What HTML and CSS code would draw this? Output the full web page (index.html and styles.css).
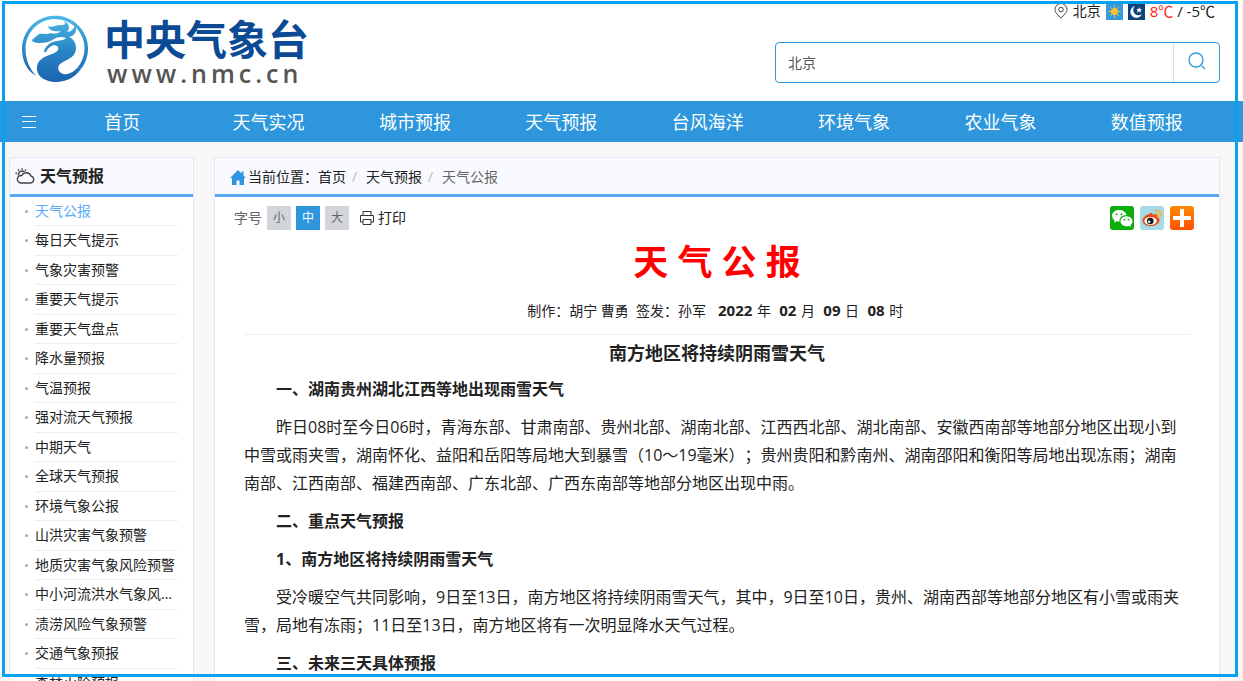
FILE: index.html
```html
<!DOCTYPE html>
<html lang="zh-CN">
<head>
<meta charset="utf-8">
<title>中央气象台 - 天气公报</title>
<link rel="stylesheet" href="styles.css">
</head>
<body>
<div class="page">
  <header class="header">
    <a class="logo" href="#">
      <svg class="logo-mark" viewBox="0 0 68 68" aria-hidden="true">
        <defs><linearGradient id="lg" gradientUnits="userSpaceOnUse" x1="0" y1="0" x2="0" y2="68"><stop offset="0" stop-color="#4cbbe8"/><stop offset="0.5" stop-color="#2b87c6"/><stop offset="1" stop-color="#1a62b0"/></linearGradient></defs>
        <g fill="url(#lg)">
          <path d="M15 61C5 55 1 45 1 33.500A33 33 0 1 1 60 54L57 52A29.500 29.500 0 1 0 4.500 33.500C4.500 44 8 53 15 61Z"/>
          <path d="M11 25C13 23 16 21 18 19C22 18 26 20 29 18C33 19 37 19 40 16C35 17 28 16 27 11C31 13 35 10 40 10C44 10 45 9 43 6C49 9 49 14 46 17C50 17 53 14 54 10C57 17 53 21 48 22C52 24 55 27 55 33C55 41 48 44 42 47C36 50 36 55 40 58C45 61 52 58 57 52L60 54C52 65 42 67 33 67C22 66 15 60 16 52C17 42 28 41 35 37C39 34 38 31 33 30C29 31 27 33 25 37L23 37C24 31 29 27 36 26C40 25 44 25 45 23C40 21 36 22 33 24C28 27 24 28 18 28C15 28 11 27 11 25Z"/>
        </g>
      </svg>
      <span class="logo-text"><span class="logo-name">中央气象台</span><span class="logo-url">www.nmc.cn</span></span>
    </a>
    <div class="header-side">
      <div class="weather">
        <svg class="pin" viewBox="0 0 14 16" aria-hidden="true"><path d="M7 15.200C4 12 1 9.500 1 6.500a6 6 0 0 1 12 0C13 9.500 10 12 7 15.200Z"/><circle cx="7" cy="6.500" r="2.300"/></svg>
        <span class="city">北京</span>
        <svg class="wicon" viewBox="0 0 17 17" aria-hidden="true"><rect width="17" height="17" fill="#359bd9"/><path d="M8.500 2v13M2 8.500h13M4 4l9 9M13 4l-9 9" stroke="#c9bd6a"/><circle cx="8.500" cy="8.500" r="3.500" fill="#fbc02d"/></svg>
        <svg class="wicon" viewBox="0 0 17 17" aria-hidden="true"><rect width="17" height="17" fill="#0d4379"/><path d="M7 3A6 6 0 1 0 14 11A5 5 0 0 1 7 3Z" fill="#fff"/><path d="M11 4l1 2 2 .300-1.500 1.300.300 2-1.800-1-1.800 1 .300-2L8.500 6.300l2-.300z" fill="#fff"/></svg>
        <span class="temp"><span class="hot">8℃</span> / -5℃</span>
      </div>
      <form class="search">
        <input class="search-input" type="text" value="北京" aria-label="城市搜索">
        <button class="search-btn" type="button" aria-label="搜索"><svg viewBox="0 0 18 18" aria-hidden="true"><circle cx="8" cy="8" r="7"/><path d="M13.500 13.500l3.500 3.500"/></svg></button>
      </form>
    </div>
  </header>
  <nav class="nav">
    <button class="menu-btn" type="button" aria-label="菜单"><svg viewBox="0 0 14 12" aria-hidden="true"><path d="M0 .500h14M0 5.500h14M0 11.500h14"/></svg></button>
    <div class="nav-links">
      <a href="#">首页</a><a href="#">天气实况</a><a href="#">城市预报</a><a href="#">天气预报</a><a href="#">台风海洋</a><a href="#">环境气象</a><a href="#">农业气象</a><a href="#">数值预报</a>
    </div>
  </nav>
  <div class="content">
    <aside class="sidebar">
      <h2 class="panel-head side-title">
        <svg class="cloud" viewBox="0 0 20 16" aria-hidden="true"><path d="M5.500 15h10a3.500 3.500 0 0 0 .500-6.900A5 5 0 0 0 6.800 7.500A3.800 3.800 0 0 0 5.500 15Z"/><path d="M3.500 7.500A3.700 3.700 0 0 1 9.500 4M.500 5l1.500.500M3 1.500l1 1.300M7 .200v1.500M11 1.500l-1 1.200"/></svg>
        天气预报
      </h2>
      <ul class="side-list">
        <li class="active"><a href="#">天气公报</a></li>
        <li><a href="#">每日天气提示</a></li>
        <li><a href="#">气象灾害预警</a></li>
        <li><a href="#">重要天气提示</a></li>
        <li><a href="#">重要天气盘点</a></li>
        <li><a href="#">降水量预报</a></li>
        <li><a href="#">气温预报</a></li>
        <li><a href="#">强对流天气预报</a></li>
        <li><a href="#">中期天气</a></li>
        <li><a href="#">全球天气预报</a></li>
        <li><a href="#">环境气象公报</a></li>
        <li><a href="#">山洪灾害气象预警</a></li>
        <li><a href="#">地质灾害气象风险预警</a></li>
        <li><a href="#">中小河流洪水气象风...</a></li>
        <li><a href="#">渍涝风险气象预警</a></li>
        <li><a href="#">交通气象预报</a></li>
        <li><a href="#">森林火险预报</a></li>
      </ul>
    </aside>
    <main class="main">
      <div class="panel-head crumbs">
        <svg class="home" viewBox="0 0 16 15" aria-hidden="true"><path d="M8 0L0 8h2v7h4.500v-4.500h3V15H14V8h2l-2.500-2.500V1.500h-2v2z"/></svg>
        <span>当前位置：<a href="#">首页</a></span><span class="sep">/</span><a href="#">天气预报</a><span class="sep">/</span><span class="current">天气公报</span>
      </div>
      <div class="toolbar">
        <span class="size-label">字号</span>
        <button class="size" type="button">小</button>
        <button class="size on" type="button">中</button>
        <button class="size" type="button">大</button>
        <button class="print" type="button"><svg viewBox="0 0 16 16" aria-hidden="true"><path d="M4 5.500V1.500h8v4M4 12H1.500V5.500h13V12H12M4 9.500h8v5H4z"/></svg>打印</button>
        <div class="share">
          <a href="#" aria-label="微信"><svg viewBox="0 0 24 24" aria-hidden="true"><rect width="24" height="24" rx="3" fill="#0cae0c"/><path d="M9 4C5 4 2 6.500 2 9.800c0 1.900 1 3.500 2.600 4.500L4 16.500l2.600-1.300c1 .300 2 .300 3 .300C9 11.500 12.500 9 16.500 9.300C16 6 13 4 9 4Z" fill="#fff"/><path d="M16.500 10.200c-3.400 0-6 2.200-6 5s2.600 5 6 5c.800 0 1.500-.100 2.200-.300l2.200 1.100-.600-1.900c1.400-.900 2.200-2.300 2.200-3.900c0-2.800-2.600-5-6-5Z" fill="#fff"/><g fill="#0cae0c"><circle cx="6.700" cy="8.200" r="1"/><circle cx="11.500" cy="8.200" r="1"/><circle cx="14.500" cy="13.700" r=".9"/><circle cx="18.500" cy="13.700" r=".9"/></g></svg></a>
          <a href="#" aria-label="微博"><svg viewBox="0 0 24 24" aria-hidden="true"><rect width="24" height="24" rx="3" fill="#a5dbe6"/><path d="M9 8c2-2 4-1.500 3.500.800C15 7.500 18 8 17 11c2 .500 2.700 1.800 2.500 3.500C19 18 15 20 10.500 20S2.500 18 2.500 14.500C2.500 12 5 9.500 9 8Z" fill="#ee4b17"/><ellipse cx="10.500" cy="15" rx="6.200" ry="4" fill="#fff"/><circle cx="10.300" cy="15" r="3.300" fill="#181818"/><circle cx="9.200" cy="15.800" r="1.200" fill="#fff"/><path d="M16 7.500c2-.300 3 1 2.800 2.800M15.500 4.500c4-.500 6.500 2 6 6" fill="none" stroke="#f3b32b" stroke-width="1.600" stroke-linecap="round"/></svg></a>
          <a href="#" aria-label="更多分享"><svg viewBox="0 0 24 24" aria-hidden="true"><defs><linearGradient id="og" x1="0" y1="0" x2="0" y2="1"><stop offset="0" stop-color="#ff8a00"/><stop offset="1" stop-color="#ff5000"/></linearGradient></defs><rect width="24" height="24" rx="3" fill="url(#og)"/><path d="M12 3v18M3 12h18" stroke="#fff" stroke-width="4"/></svg></a>
        </div>
      </div>
      <article class="article">
        <h1 class="title">天 气 公 报</h1>
        <p class="meta">制作：胡宁 曹勇&nbsp; 签发：孙军 &nbsp; <b>2022</b> 年 &nbsp;<b>02</b> 月 &nbsp;<b>09</b> 日 &nbsp;<b>08</b> 时&nbsp;</p>
        <h2 class="subtitle">南方地区将持续阴雨雪天气</h2>
        <h3>一、湖南贵州湖北江西等地出现雨雪天气</h3>
        <p>昨日08时至今日06时，青海东部、甘肃南部、贵州北部、湖南北部、江西西北部、湖北南部、安徽西南部等地部分地区出现小到中雪或雨夹雪，湖南怀化、益阳和岳阳等局地大到暴雪（10～19毫米）；贵州贵阳和黔南州、湖南邵阳和衡阳等局地出现冻雨；湖南南部、江西南部、福建西南部、广东北部、广西东南部等地部分地区出现中雨。</p>
        <h3>二、重点天气预报</h3>
        <h3>1、南方地区将持续阴雨雪天气</h3>
        <p>受冷暖空气共同影响，9日至13日，南方地区将持续阴雨雪天气，其中，9日至10日，贵州、湖南西部等地部分地区有小雪或雨夹雪，局地有冻雨；11日至13日，南方地区将有一次明显降水天气过程。</p>
        <h3>三、未来三天具体预报</h3>
      </article>
    </main>
  </div>
  <div class="frame"></div>
</div>
</body>
</html>
```
FILE: styles.css
```css
* { box-sizing: border-box; }
body {
  margin: 0;
  background: #f7f7f7;
  color: #222;
  font: 14px/20px "Open Sans", "Noto Sans CJK SC", sans-serif;
  text-spacing-trim: space-all;
}
h1, h2, h3, p, ul { margin: 0; padding: 0; }
a { color: inherit; text-decoration: none; }
button, input { font: inherit; color: inherit; border: 0; margin: 0; padding: 0; background: none; }
svg { display: block; flex: none; }

.page { position: relative; height: 100vh; overflow: hidden; }
.frame {
  position: absolute;
  inset: 1px 5px 4px 2px;
  border: 3px solid #08a2ef;
  pointer-events: none;
}

.header {
  display: flex;
  justify-content: space-between;
  height: 101px;
  padding: 1px 23px 0 21px;
  background: #fff;
}
.logo { display: flex; gap: 15px; padding-top: 14px; }
.logo-mark { width: 68px; height: 68px; }
.logo-text { display: flex; flex-direction: column; }
.logo-name { font-size: 41px; line-height: 48px; font-weight: 700; color: #0b4a94; }
.logo-url { padding-left: 3px; font-size: 25px; line-height: 20px; font-weight: 600; letter-spacing: 4px; color: #555; }

.header-side { display: flex; flex-direction: column; gap: 21px; width: 445px; }
.weather { display: flex; align-items: center; justify-content: flex-end; gap: 5px; height: 20px; padding-right: 5px; }
.pin { width: 14px; height: 16px; fill: none; stroke: #444; }
.wicon { width: 17px; height: 17px; }
.temp { font-size: 15px; }
.hot { color: #f22; }
.search { display: flex; height: 41px; border: 1px solid #3296d8; border-radius: 4px; background: #fff; }
.search-input { flex: 1; min-width: 0; padding: 0 12px; color: #555; outline: 0; }
.search-btn { display: flex; align-items: center; justify-content: center; width: 46px; padding-bottom: 4px; border-left: 1px solid #ddd; }
.search-btn svg { width: 18px; height: 18px; fill: none; stroke: #3296d8; stroke-width: 1.300; }

.nav { display: flex; height: 41px; padding-right: 23px; background: #2d96dc; color: #fff; }
.menu-btn { width: 49px; padding-left: 22px; }
.menu-btn svg { width: 14px; height: 12px; stroke: #fff; }
.nav-links { display: flex; flex: 1; }
.nav-links a { flex: 1; text-align: center; font-size: 18px; line-height: 42px; }

.content { display: flex; gap: 20px; padding: 15px 23px 0 9px; }
.sidebar { flex: none; width: 185px; border: 1px solid #e4e8ee; background: #fff; }
.main { flex: 1; min-width: 0; border: 1px solid #e4e8ee; background: #fff; }
.panel-head { display: flex; align-items: center; height: 39px; border-bottom: 3px solid #5ba9f8; background: #f8faff; }
.side-title { gap: 5px; padding-left: 5px; font-size: 16px; }
.cloud { width: 20px; height: 16px; fill: none; stroke: #444; stroke-width: 1.400; }
.side-list { padding: 0 15px 0 25px; list-style: none; }
.side-list li { position: relative; height: 29px; border-bottom: 1px solid #eee; line-height: 28px; }
.side-list li:nth-child(even) { height: 30px; }
.side-list li::before { position: absolute; left: -10px; top: 13px; width: 3px; height: 3px; border-radius: 50%; background: #aaa; content: ""; }
.side-list a { display: block; overflow: hidden; white-space: nowrap; }
.side-list .active { color: #5ba9f8; }

.crumbs { padding: 2px 0 0 15px; }
.home { width: 16px; height: 15px; margin-right: 2px; fill: #2d96dc; }
.sep { width: 20px; padding-left: 6px; color: #bbb; }
.current { color: #666; }

.toolbar { display: flex; align-items: center; gap: 5px; padding: 9px 25px 0 19px; }
.size-label { color: #666; }
.size { width: 24px; height: 24px; background: #d2d5db; color: #666; font-size: 12px; line-height: 24px; }
.size.on { background: #2d96dc; color: #fff; }
.print { display: flex; align-items: center; gap: 3px; padding-left: 5px; }
.print svg { width: 16px; height: 16px; fill: none; stroke: #333; }
.share { display: flex; gap: 6px; margin-left: auto; }
.share svg { width: 24px; height: 24px; }

.article { padding: 8px 29px 0; font-size: 16px; line-height: 28px; }
.article h3 { margin-bottom: 10px; padding-left: 32px; font-size: 16px; }
.article p { margin-bottom: 10px; text-indent: 32px; }
.article .title { color: #f00; font-size: 35px; line-height: 48px; text-align: center; }
.article .meta { margin-bottom: 4px; padding: 10px 0 9px; border-bottom: 1px solid #eee; font-size: 14px; text-align: center; text-indent: 0; }
.meta b { margin: 0 1px; font-size: 15px; }
.article .subtitle { margin-bottom: 8px; font-size: 18px; text-align: center; }
```
